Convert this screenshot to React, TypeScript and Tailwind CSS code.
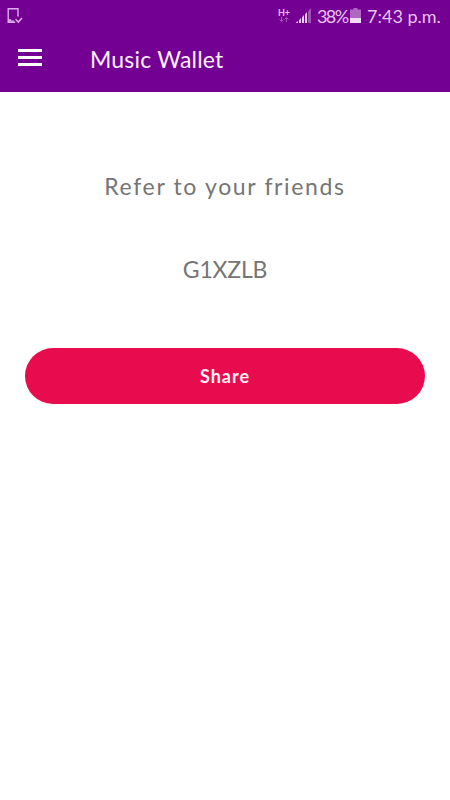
function DeviceCheckIcon() {
  return (
    <svg width="18" height="18" viewBox="0 0 18 18" fill="none" stroke="#dcaeea" strokeWidth="1.4">
      <path d="M12 9.500V1.700H2.200v13.500h7" />
      <path d="M2.200 12.900h3M2.200 14.200h6" strokeWidth="1.2" />
      <path d="M9.600 12.300l2.700 2.700 3.700-4" strokeWidth="1.600" />
    </svg>
  )
}

function SignalIcon() {
  return (
    <svg width="16" height="16" viewBox="0 0 16 16">
      <path d="M0 15h2v-2L0 14.500z" fill="#efd3f6" />
      <path d="M3 12.200L5 10v5H3z" fill="#efd3f6" />
      <path d="M6 9.200L8 7v8H6z" fill="#efd3f6" />
      <path d="M9 6.200L11 4v11H9z" fill="#efd3f6" />
      <path d="M12 3.200L15 0v15h-3z" fill="#a552b8" />
    </svg>
  )
}

function BatteryIcon() {
  return (
    <svg width="11" height="16" viewBox="0 0 11 16">
      <path d="M3.500 0h4v1.500H11V10H0V1.500h3.500z" fill="#b266c4" />
      <path d="M0 10h11v5H0z" fill="#f3daf8" />
    </svg>
  )
}

function NetworkIcon() {
  return (
    <div className="flex w-3 flex-col items-center">
      <span className="text-[9px] font-bold leading-[9px]">H+</span>
      <svg width="10" height="6" viewBox="0 0 10 6" fill="none" stroke="#a552b8" strokeWidth="1">
        <path d="M2.500 0v4.500M.5 2.500l2 2 2-2M7.500 5V.5M5.500 2.500l2-2 2 2" />
      </svg>
    </div>
  )
}

function StatusBar() {
  return (
    <div className="flex h-8 items-start justify-between pl-[6px] pr-[10px] text-[#e9c4f2]">
      <div className="pt-[7px]">
        <DeviceCheckIcon />
      </div>
      <div className="flex items-start">
        <div className="pt-[8px]">
          <NetworkIcon />
        </div>
        <div className="ml-[6px] pt-[8px]">
          <SignalIcon />
        </div>
        <span className="ml-[5px] w-[31px] whitespace-nowrap pt-[5px] text-[18px] leading-[22px] tracking-[-1.6px]">38%</span>
        <div className="ml-[2px] pt-[8px]">
          <BatteryIcon />
        </div>
        <span className="ml-[6px] w-[73px] whitespace-nowrap pt-[5px] text-[18px] leading-[22px]">7:43 p.m.</span>
      </div>
    </div>
  )
}

function AppBar() {
  return (
    <div className="flex h-[60px] items-start pl-[18px]">
      <button aria-label="Menu" className="mt-[17px] flex w-6 flex-col gap-1">
        <span className="h-[3px] bg-white" />
        <span className="h-[3px] bg-white" />
        <span className="h-[3px] bg-white" />
      </button>
      <h1 className="ml-12 mt-[11px] whitespace-nowrap text-[23px] leading-8 tracking-[0.2px] text-[#fbeffd]">
        Music Wallet
      </h1>
    </div>
  )
}

export default function App() {
  return (
    <div className="flex h-[800px] w-[450px] flex-col overflow-hidden bg-white font-['Lato',sans-serif]">
      <header className="h-[92px] bg-[#730092]">
        <StatusBar />
        <AppBar />
      </header>
      <main className="flex flex-col items-center px-[25px] pt-[78px] text-[#757575]">
        <p className="whitespace-nowrap text-[23px] leading-8 tracking-[1.65px]">Refer to your friends</p>
        <p className="mt-[51px] text-[23px] leading-8 tracking-[-0.2px]">G1XZLB</p>
        <button className="mt-[63px] h-[56px] w-full rounded-full bg-[#e80c4f] text-[18px] font-bold tracking-[1px] text-[#ffeef4]">
          Share
        </button>
      </main>
    </div>
  )
}
